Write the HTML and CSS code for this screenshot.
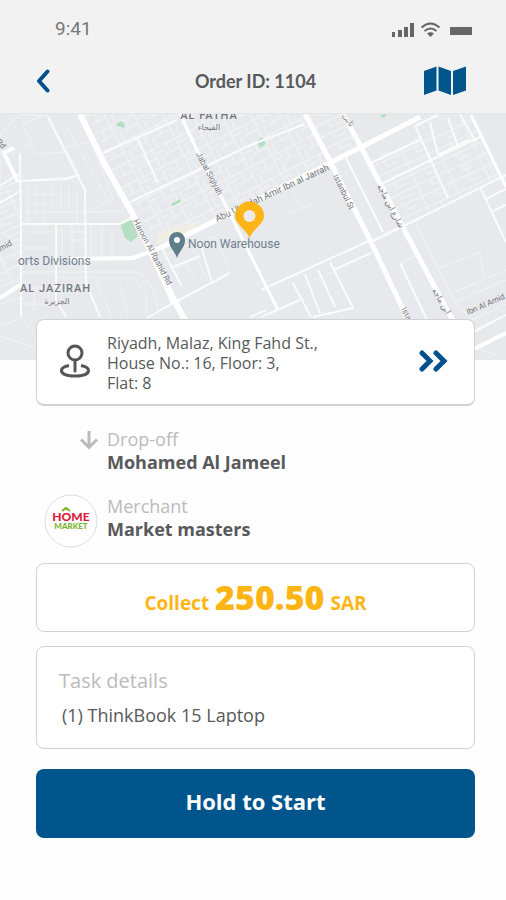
FILE: index.html
```
<!DOCTYPE html>
<html lang="en">
<head>
    <meta charset="UTF-8">
    <meta name="viewport" content="width=device-width, initial-scale=1.0">
    <title>Order ID: 1104</title>
    <link rel="stylesheet" href="styles.css">
</head>
<body>
    <header class="top">
        <div class="status-bar">
            <span class="time">9:41</span>
            <svg class="status-icons" width="82" height="18" viewBox="0 0 82 18" aria-hidden="true">
                <g fill="#666">
                    <rect x="1" y="11" width="3" height="5"/>
                    <rect x="7" y="9" width="4" height="7"/>
                    <rect x="13" y="6" width="4" height="10"/>
                    <rect x="19" y="2" width="4" height="14"/>
                    <path d="M36 12.500q3.500-2.500 7 0L39.500 16z"/>
                    <rect x="59" y="6" width="22" height="8"/>
                </g>
                <g fill="none" stroke="#666" stroke-width="2">
                    <path d="M30.500 6.500q9-8 18 0"/>
                    <path d="M33.500 10q6-5 12 0"/>
                </g>
            </svg>
        </div>
        <nav class="nav-bar">
            <button class="icon-button" aria-label="Back">
                <svg width="14" height="24" viewBox="0 0 14 24"><path d="M11.500 2.500L3 12l8.500 9.500" fill="none" stroke="#00508c" stroke-width="4" stroke-linecap="round" stroke-linejoin="round"/></svg>
            </button>
            <h1>Order ID: 1104</h1>
            <button class="icon-button map-button" aria-label="Map">
                <svg width="44" height="30" viewBox="0 0 44 30" fill="#00568c">
                    <path d="M1 5l12.500-4.500v24L1 29z"/>
                    <path d="M15.500.500L28 5v24l-12.500-4.500z"/>
                    <path d="M30 5L43 .500v24L30 29z"/>
                </svg>
            </button>
        </nav>
    </header>

    <svg class="map" viewBox="0 0 506 246" preserveAspectRatio="xMidYMid slice" role="img" aria-label="Map">
        <defs>
            <pattern id="blocks" width="26" height="20" patternUnits="userSpaceOnUse" patternTransform="rotate(-27)">
                <path d="M0 1h26M0 11h15M5 1v10M15 1v19M21 11v9M15 6h11" fill="none" stroke="#f4f5f7"/>
            </pattern>
            <pattern id="rows" width="34" height="12" patternUnits="userSpaceOnUse" patternTransform="rotate(-25)">
                <path d="M0 1h34M8 1v11M22 1v6M22 7h12" fill="none" stroke="#f4f5f7"/>
            </pattern>
        </defs>
        <rect width="506" height="246" fill="#e7e9ec"/>
        <g>
            <path d="M82 0H303L331 48L165 130L133 99z" fill="url(#blocks)"/>
            <path d="M305 0H343L360 31L331 48zM0 78L20 74V165L0 174z" fill="url(#rows)"/>
            <path d="M362 46L471 2L500 64L402 110z" fill="url(#rows)"/>
            <path d="M20 0L48 2L80 62L20 67L0 75V20z" fill="none" stroke="#f4f5f6"/>
        </g>
        <path d="M155 129L160 120L195 108L198 113L168 128z" fill="#f1eee3"/>
        <g fill="#b5dfc3">
            <path d="M120 110L132 106L138 122L131 128L125 124z"/>
            <path d="M116 10L121 7L125 10L124 14L117 12z"/>
            <path d="M171 90L180 85L181 88L173 92z"/>
            <path d="M257 27L262 23L266 30L260 34z"/>
            <path d="M380 1L386 0L385 3L382 4z"/>
        </g>
        <g fill="none" stroke="#f2f3f5" stroke-width="1">
            <path d="M22 34L32 28L22 11L42 2M30 28L36 40L70 38M63 33L91 28L113 85L90 96M66 12L110 90"/>
            <path d="M28 70V108M36 70V100M44 78V110M52 70V96M61 72V96M69 72V96M77 78V109M26 98H84M28 90H52M28 80H60M88 98L124 97"/>
            <path d="M62 113V141M68 118H84M68 126H84M72 110V142M91 112V142M102 112V142M112 113V142M24 134H54M26 118H54"/>
            <path d="M22 158H140L153 175L159 201M60 164H134L146 180V202M93 160L112 203M120 170L128 202M22 174H48V190H22M34 174V196M0 190L20 184M21 203L36 224M0 212L20 205M0 222L36 234"/>
            <path d="M168 140L190 130L207 165M176 154L198 144M205 126L214 122L230 156M186 148L196 170M300 92L292 76M283 103L318 87"/>
            <path d="M416 111L455 188L506 166M440 154L480 138L484 166M478 102L486 114L492 109M458 36L478 76M480 30L495 62M371 126L430 98M400 149L416 142M305 170L350 151M253 172L275 164"/>
            <path d="M455 188L473 206L506 190M474 234L500 242M455 178L506 156"/>
        </g>
        <g fill="none" stroke="#fafbfb" stroke-width="2">
            <path d="M48 3L63 33L85 76L86 169L100 203"/>
            <path d="M20 39L21 110V203M20 67L67 65L78 61M20 110H120L133 103M56 111V186L66 203"/>
            <path d="M0 89L20 77M0 72L20 59"/>
            <path d="M103 39L177 6M130 88L253 30L305 10M137 23L158 69"/>
            <path d="M147 204L175 188L230 159M163 136L182 173M200 128L212 169M173 153L200 142M172 190L152 144"/>
            <path d="M346 44L383 118M371 128L396 116L506 61M261 176L371 126"/>
            <path d="M371 49L420 26M383 69L480 23M415 12L448 84M430 8L438 41M448 4L458 33M438 41L470 25M415 12L438 1M460 0L476 28"/>
            <path d="M480 73L506 128M493 97L506 91M486 85L506 75"/>
            <path d="M261 203L300 186M293 169L311 203M305 161L320 199M318 156L335 193M330 148L353 194L313 203M333 156L371 139"/>
            <path d="M400 149L430 212M473 218L506 201M250 203L266 196"/>
        </g>
        <g fill="none" stroke="#fff" stroke-linejoin="round">
            <path d="M180 0L200 43L223 86L253 146L278 196" stroke-width="3"/>
            <path d="M471 1L506 73" stroke-width="3"/>
            <path d="M3 37L18 68M0 184L20 171M70 145L133 144L160 134M3 39L14 34" stroke-width="4"/>
            <path d="M474 235L506 219" stroke-width="4"/>
            <path d="M160 134L215 107L330 49L420 3" stroke-width="5"/>
            <path d="M80 0L105 51L132 99L174 186L185 206" stroke-width="6"/>
            <path d="M305 0L331 49L370 126L410 210" stroke-width="5"/>
            <path d="M343 0L360 31L406 119L440 183L455 210" stroke-width="5"/>
        </g>
        <g class="map-text">
            <text x="209" y="5" class="area" text-anchor="middle">AL FATHA</text>
            <text x="209" y="16" class="arabic" text-anchor="middle">الفيحاء</text>
            <text x="18" y="151" class="place">orts Divisions</text>
            <text x="20" y="178" class="area">AL JAZIRAH</text>
            <text x="57" y="190" class="arabic" text-anchor="middle">الجزيرة</text>
            <text x="188" y="134" class="place">Noon Warehouse</text>
            <text transform="translate(133 107) rotate(62)">Haroon Al Rashid Rd</text>
            <text transform="translate(196 40) rotate(62)">Jabal Siqiyah</text>
            <text transform="translate(217 108) rotate(-25)" class="street">Abu Ubaidah Amir Ibn al Jarrah</text>
            <text transform="translate(333 62) rotate(64)">Istanbul St</text>
            <text transform="translate(377 72) rotate(62)">شارع ابن ماجه</text>
            <text transform="translate(432 176) rotate(60)">ابن ماجه</text>
            <text transform="translate(468 201) rotate(-24)">Ibn Al Amid</text>
            <text transform="translate(341 2) rotate(50)">ثابت</text>
            <text transform="translate(401 195) rotate(64)">Istanbul</text>
            <text transform="translate(-12 144) rotate(-28)">Al Amid</text>
            <text transform="translate(-4 28) rotate(50)">Rd</text>
        </g>
        <path d="M177 144C175 137 169 134 169 126a8 8 0 0 1 16 0C185 134 179 137 177 144z" fill="#5f7d8b"/>
        <circle cx="177" cy="126" r="3" fill="#fff"/>
        <path d="M249.500 124C246 115 235 110 235 102a14.500 14.500 0 0 1 29 0C264 110 253 115 249.500 124z" fill="#fdb515"/>
        <circle cx="249.500" cy="102" r="6" fill="#e9ebee"/>
    </svg>

    <main class="content">
        <section class="card address">
            <svg class="address-icon" width="32" height="34" viewBox="0 0 32 34" fill="none" stroke="#555" stroke-width="3">
                <circle cx="16" cy="9" r="7"/>
                <path d="M16 16v11" stroke-linecap="round"/>
                <path d="M10 21.500C5 22.500 2.500 24 2.500 26.500C2.500 30 8 32 16 32s13.500-2 13.500-5.500c0-2.500-2.500-4-7.500-5"/>
            </svg>
            <p>Riyadh, Malaz, King Fahd St.,<br>House No.: 16, Floor: 3,<br>Flat: 8</p>
            <button class="icon-button" aria-label="Open directions">
                <svg width="30" height="22" viewBox="0 0 30 22" fill="none" stroke="#00508c" stroke-width="5" stroke-linecap="round"><path d="M4 3l8 8-8 8M18 3l8 8-8 8"/></svg>
            </button>
        </section>

        <section class="info">
            <div class="info-icon arrow">
                <svg width="20" height="20" viewBox="0 0 20 20" fill="none" stroke="#bbb" stroke-width="3"><path d="M10 1v16M2 9.500l8 8 8-8"/></svg>
            </div>
            <div>
                <h2>Drop-off</h2>
                <p>Mohamed Al Jameel</p>
            </div>
        </section>

        <section class="info">
            <div class="info-icon">
                <svg class="logo" width="54" height="54" viewBox="0 0 54 54" role="img" aria-label="Home Market">
                    <circle cx="27" cy="27" r="26" fill="#fff" stroke="#ddd"/>
                    <path d="M18 17l4-3 4 3" fill="none" stroke="#7ab32e" stroke-width="2"/>
                    <text x="27" y="27" class="logo-home">HOME</text>
                    <text x="27" y="35" class="logo-market">MARKET</text>
                </svg>
            </div>
            <div>
                <h2>Merchant</h2>
                <p>Market masters</p>
            </div>
        </section>

        <section class="card collect">
            <p>Collect <strong>250.50</strong> SAR</p>
        </section>

        <section class="card task">
            <h2>Task details</h2>
            <p>(1) ThinkBook 15 Laptop</p>
        </section>

        <button class="start-button">Hold to Start</button>
    </main>
</body>
</html>
```
FILE: styles.css
```
* {
    box-sizing: border-box;
}
body {
    margin: 0;
    font-family: "Open Sans", sans-serif;
    color: #58595b;
    background-color: #fefefe;
}
h1, h2, p {
    margin: 0;
}
button {
    font-family: inherit;
    cursor: pointer;
}
.top {
    background-color: #f2f2f2;
    border-bottom: 1px solid #e6e6e6;
}
.status-bar {
    display: flex;
    justify-content: space-between;
    align-items: center;
    height: 56px;
    padding: 0 33px 0 55px;
}
.time {
    font-family: Roboto, sans-serif;
    font-size: 19px;
    color: #777;
}
.status-icons {
    margin-top: 4px;
}
.nav-bar {
    display: grid;
    grid-template-columns: 1fr auto 1fr;
    align-items: center;
    height: 57px;
    padding: 0 31px 8px 36px;
}
.nav-bar h1 {
    font-family: Lato, sans-serif;
    font-size: 18px;
    font-weight: bold;
}
.icon-button {
    display: flex;
    padding: 0;
    border: none;
    background: none;
    justify-self: start;
}
.map-button {
    justify-self: end;
    margin-right: 8px;
}
.map {
    display: block;
    width: 100%;
    height: 246px;
}
.map-text {
    font-family: Roboto, "DejaVu Sans", sans-serif;
    font-size: 8px;
    fill: #74777c;
}
.map-text .street {
    font-size: 9px;
}
.map-text .place {
    font-size: 12px;
    fill: #71808e;
}
.map-text .area {
    font-size: 11px;
    font-weight: 500;
    letter-spacing: 1px;
}
.content {
    position: relative;
    display: flex;
    flex-direction: column;
    margin-top: -41px;
    padding: 0 31px 40px 36px;
}
.card {
    border: 1px solid #d2d2d2;
    border-radius: 8px;
    background-color: white;
}
.address {
    display: flex;
    align-items: center;
    padding: 13px 26px 11px 22px;
    border-bottom-width: 2px;
    margin-bottom: 21px;
}
.address p {
    flex: 1;
    padding-left: 16px;
    font-size: 16px;
    line-height: 20px;
}
.address-icon, .address .icon-button {
    margin-bottom: 5px;
}
.info {
    display: flex;
    margin-bottom: 20px;
}
.info-icon {
    width: 71px;
    padding-left: 8px;
}
.arrow {
    padding: 3px 0 0 43px;
}
.logo {
    display: block;
    margin-bottom: -7px;
}
.logo-home, .logo-market {
    font-family: Lato, sans-serif;
    font-weight: 900;
    text-anchor: middle;
}
.logo-home {
    font-size: 12px;
    fill: #d9203a;
}
.logo-market {
    font-size: 8px;
    fill: #7ab32e;
}
.info h2 {
    font-size: 18px;
    font-weight: normal;
    line-height: 24px;
    color: #bbb;
}
.info p {
    font-size: 18px;
    font-weight: bold;
    line-height: 23px;
}
.collect {
    margin-top: 2px;
    padding: 12px;
    text-align: center;
    font-size: 19px;
    font-weight: bold;
    line-height: 24px;
    color: #fdb515;
}
.collect strong {
    font-size: 34px;
    line-height: 43px;
    margin: 0 1px;
}
.task {
    margin: 14px 0 20px;
    padding: 21px 22px 20px;
}
.task h2 {
    font-size: 20px;
    font-weight: normal;
    line-height: 26px;
    color: #bbb;
}
.task p {
    padding: 8px 3px 0;
    font-size: 18px;
    line-height: 26px;
}
.start-button {
    padding: 18px 20px 22px;
    border: none;
    border-radius: 8px;
    background-color: #00568c;
    color: white;
    font-size: 22px;
    font-weight: bold;
    line-height: 29px;
}
```
